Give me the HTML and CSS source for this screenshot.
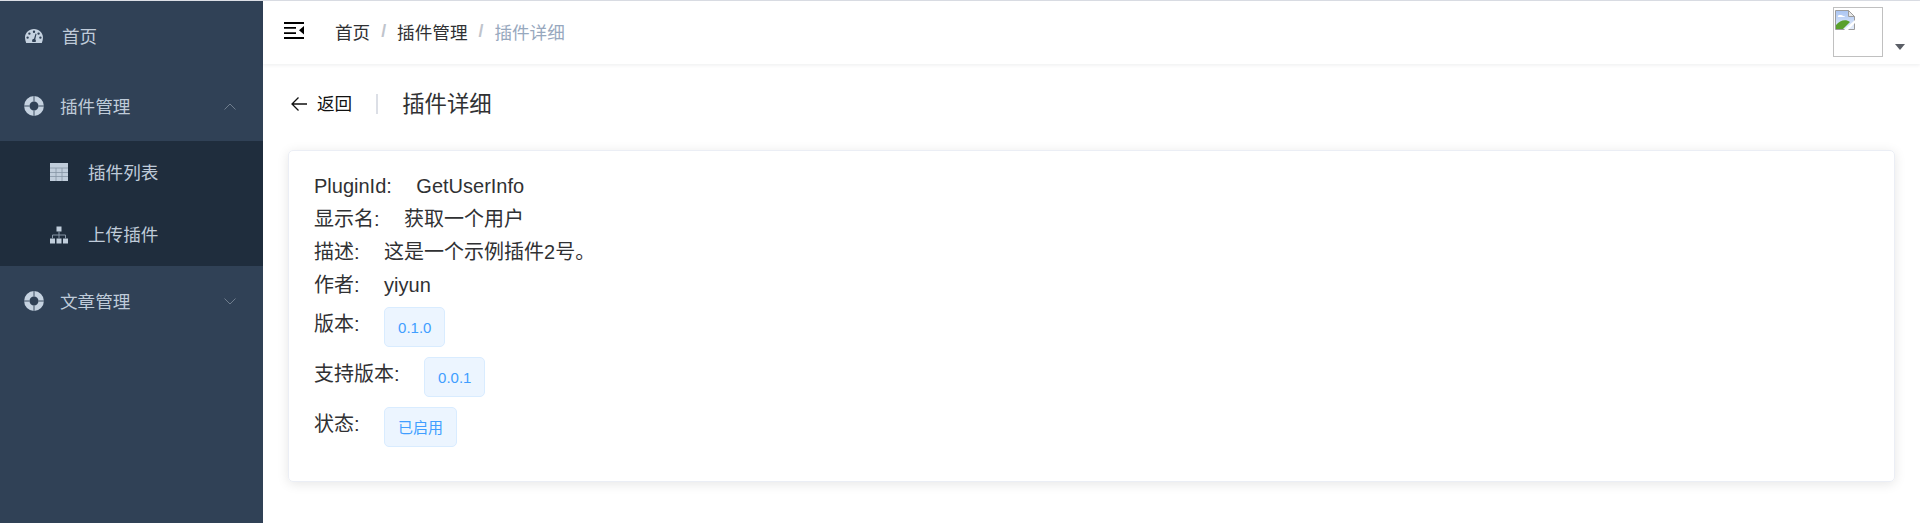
FILE: index.html
```html
<!DOCTYPE html>
<html lang="zh-CN">
<head>
<meta charset="utf-8">
<title>插件详细</title>
<link rel="stylesheet" href="styles.css">
</head>
<body>
<div class="app">
  <aside class="sidebar">
    <div class="menu-item home">
      <svg class="ico ico-dash" viewBox="0 0 18 14"><path fill-rule="evenodd" d="M9 0C4 0 0 3.600 0 8.600c0 1.900.5 3.600 1.200 5.400h15.600c.7-1.800 1.200-3.500 1.200-5.400C18 3.600 14 0 9 0zM9 1.600a1.200 1.200 0 1 1 0 2.400 1.200 1.200 0 0 1 0-2.400zM4.400 3.400a1.200 1.200 0 1 1 0 2.400 1.200 1.200 0 0 1 0-2.400zM13.600 3.400a1.200 1.200 0 1 1 0 2.400 1.200 1.200 0 0 1 0-2.400zM2.600 7.400a1.200 1.200 0 1 1 0 2.400 1.200 1.200 0 0 1 0-2.400zM15.400 7.400a1.200 1.200 0 1 1 0 2.400 1.200 1.200 0 0 1 0-2.400zM10.600 4.600l.9.3-1.200 5.400c.4.4.6.900.6 1.400 0 .5-.1.900-.4 1.300H7.500c-.3-.4-.4-.8-.4-1.300 0-1 .8-1.800 1.900-1.900z"/></svg>
      <span class="label">首页</span>
    </div>
    <div class="menu-item group">
      <svg class="ico-ring" viewBox="0 0 20 20"><circle class="band" cx="10" cy="10" r="7.200"/><path class="slit" d="M0 10h5.500M14.500 10H20M10 0v5.500M10 14.500V20"/></svg>
      <span class="label grow">插件管理</span>
      <svg class="arrow" viewBox="0 0 12 7"><path d="M.5 6.500 6 1l5.500 5.500"/></svg>
    </div>
    <div class="submenu">
      <div class="sub-item">
        <svg class="ico-sub" viewBox="0 0 18 18"><path d="M0 0h18v18H0z"/><path class="grid" d="M0 5h18M0 9.500h18M0 13.500h18M6 5v13M12 5v13"/></svg>
        <span class="label">插件列表</span>
      </div>
      <div class="sub-item">
        <svg class="ico-sub" viewBox="0 0 18 17"><path d="M6.500 0h5v5h-5zM0 12h5v5H0zM6.500 12h5v5h-5zM13 12h5v5h-5z"/><path class="wire" d="M9 5v7M2.500 12V8.500h13V12"/></svg>
        <span class="label">上传插件</span>
      </div>
    </div>
    <div class="menu-item group">
      <svg class="ico-ring" viewBox="0 0 20 20"><circle class="band" cx="10" cy="10" r="7.200"/><path class="slit" d="M0 10h5.500M14.500 10H20M10 0v5.500M10 14.500V20"/></svg>
      <span class="label grow">文章管理</span>
      <svg class="arrow" viewBox="0 0 12 7"><path d="M.5.500 6 6l5.500-5.500"/></svg>
    </div>
  </aside>
  <div class="main">
    <header class="navbar">
      <svg class="hamburger" viewBox="0 0 20 17"><path d="M0 0h20v2H0zM0 5h12v1.700H0zM0 10.300h12V12H0zM0 15h20v2H0zM20 4v8.500L15 8.200z"/></svg>
      <nav class="crumbs">
        <span class="crumb">首页</span><span class="sep">/</span>
        <span class="crumb">插件管理</span><span class="sep">/</span>
        <span class="crumb last">插件详细</span>
      </nav>
      <div class="avatar-wrap">
        <div class="avatar">
          <svg class="broken" viewBox="0 0 20 20">
            <defs><linearGradient id="sky" x1="0" y1="0" x2="0" y2="1"><stop offset="0" stop-color="#a9c4f2"/><stop offset="1" stop-color="#e6eefb"/></linearGradient></defs>
            <path fill="url(#sky)" stroke="#9c9c9c" d="M.5.500h13l6 6v13H.5z"/>
            <path fill="#e8e8e8" stroke="#9c9c9c" d="M13.500.500v6h6z"/>
            <path fill="#fff" d="M3 7a2.500 1.500 0 0 1 5-1 2 1 0 0 1 2 1z"/>
            <path fill="#5aa02c" d="M1 19v-4c4-5 10-6 14-3l-7 7z"/>
            <path fill="#fff" d="M9 20l11-10v3l-7 7z"/>
          </svg>
        </div>
        <span class="caret"></span>
      </div>
    </header>
    <section class="page-head">
      <svg class="back" viewBox="0 0 18 16"><path d="M17 8H2M8.500 1.500 2 8l6.500 6.500"/></svg>
      <span class="back-text">返回</span>
      <i class="divider"></i>
      <h1>插件详细</h1>
    </section>
    <section class="card">
      <div class="line"><span class="key">PluginId:</span><span>GetUserInfo</span></div>
      <div class="line"><span class="key">显示名:</span><span>获取一个用户</span></div>
      <div class="line"><span class="key">描述:</span><span>这是一个示例插件2号。</span></div>
      <div class="line"><span class="key">作者:</span><span>yiyun</span></div>
      <div class="tagline"><span class="key">版本:</span><span class="tag">0.1.0</span></div>
      <div class="tagline"><span class="key">支持版本:</span><span class="tag">0.0.1</span></div>
      <div class="tagline"><span class="key">状态:</span><span class="tag">已启用</span></div>
    </section>
  </div>
</div>
</body>
</html>
```
FILE: styles.css
```css
* { box-sizing: border-box; }
html, body { margin: 0; height: 100%; background: #fff; }
body {
  font-family: "Liberation Sans", "Noto Sans CJK SC", sans-serif;
  overflow: hidden;
}
.app {
  display: flex;
  height: 523px;
  border-top: 1px solid #dcdfe6;
}
.sidebar {
  width: 263px;
  flex: none;
  background: #304156;
  color: #bfcbd9;
  font-size: 17.6px;
}
.menu-item {
  height: 70px;
  display: flex;
  align-items: center;
  padding-left: 24px;
}
.label { padding-bottom: 2px; }
.grow { flex: 1; }
.ico { fill: #c5d2e0; flex: none; }
.ico-dash { width: 18px; height: 14px; margin: 0 19px 0 1px; }
.ico-ring { width: 20px; height: 20px; margin: 0 16px 0 0; flex: none; }
.band { fill: none; stroke: #c5d2e0; stroke-width: 5.4; }
.slit { fill: none; stroke: #304156; stroke-width: .9; }
.arrow {
  width: 12px;
  height: 7px;
  margin-right: 27px;
  fill: none;
  stroke: #6f7d8d;
  stroke-width: 1;
}
.submenu { background: #1f2d3d; }
.sub-item {
  height: 62.5px;
  display: flex;
  align-items: center;
  padding-left: 50px;
}
.ico-sub { width: 18px; height: 18px; margin-right: 20px; fill: #c0cddb; flex: none; }
.grid { fill: none; stroke: #8594a5; stroke-width: .8; }
.wire { fill: none; stroke: #8594a5; stroke-width: 1; }
.main { flex: 1; min-width: 0; }
.navbar {
  height: 63px;
  display: flex;
  align-items: center;
  padding-left: 21px;
  box-shadow: 0 1px 4px rgba(0, 21, 41, .08);
  font-size: 17.6px;
}
.hamburger { width: 20px; height: 17px; flex: none; margin: 0 31px 4px 0; fill: #000; }
.crumbs { display: flex; align-items: center; flex: 1; color: #303133; padding-bottom: 3px; }
.sep { margin: 0 11px; color: #c0c4cc; font-weight: 700; }
.last { color: #97a8be; }
.avatar-wrap { display: flex; align-items: flex-end; height: 50px; margin: 0 15px 1px 0; }
.avatar {
  width: 50px;
  height: 50px;
  border: 1px solid #c0c0c0;
  padding: 2px 1px;
}
.broken { display: block; width: 20px; height: 20px; }
.caret {
  width: 0;
  height: 0;
  margin: 0 0 7px 12px;
  border: 5px solid transparent;
  border-top: 6px solid #5a5e66;
  border-bottom-width: 0;
}
.page-head {
  display: flex;
  align-items: center;
  height: 43px;
  margin: 17px 25px 0;
  color: #303133;
}
.back { width: 18px; height: 16px; fill: none; stroke: #111; stroke-width: 1.3; flex: none; margin: 3px 9px 0 2px; }
.back-text { font-size: 17.6px; color: #111; }
.divider { width: 2px; height: 20px; margin: 3px 24px 0; background: #dcdfe6; }
h1 { margin: 0 0 2px; font-size: 22.4px; font-weight: 400; }
.card {
  margin: 26px 25px 0;
  height: 332px;
  padding: 19px 25px;
  border: 1px solid #ebeef5;
  border-radius: 5px;
  box-shadow: 0 2px 12px rgba(0, 0, 0, .1);
  font-size: 20px;
  line-height: 33px;
  color: #303133;
}
.line { height: 33px; }
.key { margin-right: 24.5px; }
.tagline {
  height: 40px;
  margin-top: 10px;
  display: flex;
  align-items: flex-start;
}
.line + .tagline { margin-top: 5px; }
.tagline .key { padding-top: 1px; }
.tag {
  height: 40px;
  padding: 0 13px;
  display: flex;
  align-items: center;
  font-size: 15px;
  color: #409eff;
  background: #ecf5ff;
  border: 1px solid #d9ecff;
  border-radius: 5px;
}
```
